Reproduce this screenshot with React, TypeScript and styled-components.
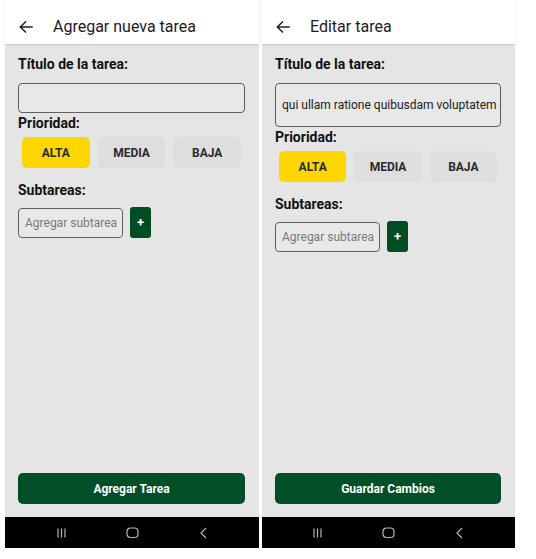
import React from "react";
import styled, { createGlobalStyle } from "styled-components";

const Global = createGlobalStyle`
  html, body { margin: 0; padding: 0; background: #ffffff; }
  body { font-family: Roboto, "Noto Sans", "Liberation Sans", sans-serif; }
  * { box-sizing: border-box; }
`;

const Page = styled.div`
  display: flex;
  gap: 3px;
  padding-left: 5px;
  height: 559px;
  align-items: flex-start;
`;

const Phone = styled.div<{ $w: number }>`
  width: ${(p) => p.$w}px;
  height: 548px;
  display: flex;
  flex-direction: column;
`;

const Header = styled.div`
  height: 44px;
  flex: 0 0 44px;
  background: #ffffff;
  display: flex;
  align-items: flex-start;
  padding: 17px 0 0 14px;
  gap: 20px;
  position: relative;
  z-index: 1;
  box-shadow: 0 1px 1.5px rgba(0, 0, 0, 0.12);
`;

const BackIcon = styled.svg`
  width: 14px;
  height: 12px;
  margin-top: 4px;
  flex: 0 0 auto;
`;

const Title = styled.div`
  font-size: 16px;
  line-height: 19px;
  color: #1c1c1c;
`;

const Content = styled.div`
  flex: 1;
  background: #e5e5e5;
  display: flex;
  flex-direction: column;
  padding: 12px 14px 13px 13px;
`;

const Label = styled.div<{ $mt?: number; $mb?: number }>`
  font-size: 14px;
  line-height: 17px;
  font-weight: 700;
  color: #111;
  margin-top: ${(p) => p.$mt ?? 0}px;
  margin-bottom: ${(p) => p.$mb ?? 10}px;
`;

const TextInput = styled.div<{ $h: number }>`
  height: ${(p) => p.$h}px;
  border: 1px solid #5f5f5f;
  border-radius: 4px;
  background: #e8e8e8;
  display: flex;
  align-items: center;
  padding: 0 6px;
  font-size: 12px;
  color: #222;
  white-space: nowrap;
  overflow: hidden;
`;

const PriorityRow = styled.div`
  display: flex;
  margin-top: 5px;
  margin-bottom: 14px;
`;

const PriorityButton = styled.div<{ $active?: boolean }>`
  flex: 1;
  margin: 0 4px;
  height: 31px;
  border-radius: 5px;
  background: ${(p) => (p.$active ? "#ffd700" : "#dedede")};
  display: flex;
  align-items: center;
  justify-content: center;
  font-size: 12px;
  font-weight: 700;
  color: #2a2a2a;
`;

const SubRow = styled.div`
  display: flex;
  gap: 7px;
  align-items: center;
`;

const SubInput = styled.div`
  width: 105px;
  height: 30px;
  border: 1px solid #5f5f5f;
  border-radius: 4px;
  background: #e8e8e8;
  display: flex;
  align-items: center;
  padding: 0 6px;
  font-size: 12px;
  color: #7a7a7a;
  white-space: nowrap;
  overflow: hidden;
`;

const PlusButton = styled.div`
  width: 21px;
  height: 31px;
  border-radius: 3px;
  background: #004d24;
  color: #fff;
  font-weight: 700;
  font-size: 13px;
  display: flex;
  align-items: center;
  justify-content: center;
`;

const Spacer = styled.div`
  flex: 1;
`;

const PrimaryButton = styled.div`
  height: 31px;
  border-radius: 5px;
  background: #004f26;
  color: #fff;
  font-weight: 700;
  font-size: 12px;
  display: flex;
  align-items: center;
  justify-content: center;
`;

const NavBar = styled.div`
  height: 31px;
  flex: 0 0 31px;
  background: #000;
  display: flex;
  align-items: center;
  justify-content: center;
  gap: 58px;
`;

const NavIcon = styled.svg`
  width: 13px;
  height: 12px;
  display: block;
`;

function Back() {
  return (
    <BackIcon viewBox="0 0 14 12">
      <path d="M13 6H1.5M6.5 1L1.3 6l5.2 5" stroke="#222" strokeWidth="1.5" fill="none" strokeLinecap="square" />
    </BackIcon>
  );
}

function Nav() {
  return (
    <NavBar>
      <NavIcon viewBox="0 0 13 12">
        <path d="M3 1.5v9M6.5 1.5v9M10 1.5v9" stroke="#b5b5b5" strokeWidth="1.2" />
      </NavIcon>
      <NavIcon viewBox="0 0 13 12">
        <rect x="1" y="1" width="11" height="9.5" rx="3.5" stroke="#b5b5b5" strokeWidth="1.2" fill="none" />
      </NavIcon>
      <NavIcon viewBox="0 0 13 12">
        <path d="M9 1L4 6l5 5" stroke="#b5b5b5" strokeWidth="1.2" fill="none" />
      </NavIcon>
    </NavBar>
  );
}

type ScreenProps = {
  width: number;
  title: string;
  value: string;
  inputHeight: number;
  action: string;
};

function Screen({ width, title, value, inputHeight, action }: ScreenProps) {
  return (
    <Phone $w={width}>
      <Header>
        <Back />
        <Title>{title}</Title>
      </Header>
      <Content>
        <Label>Título de la tarea:</Label>
        <TextInput $h={inputHeight}>{value}</TextInput>
        <Label $mt={2} $mb={0}>Prioridad:</Label>
        <PriorityRow>
          <PriorityButton $active>ALTA</PriorityButton>
          <PriorityButton>MEDIA</PriorityButton>
          <PriorityButton>BAJA</PriorityButton>
        </PriorityRow>
        <Label $mb={8}>Subtareas:</Label>
        <SubRow>
          <SubInput>Agregar subtarea</SubInput>
          <PlusButton>+</PlusButton>
        </SubRow>
        <Spacer />
        <PrimaryButton>{action}</PrimaryButton>
      </Content>
      <Nav />
    </Phone>
  );
}

export default function App() {
  return (
    <>
      <Global />
      <Page>
        <Screen width={254} title="Agregar nueva tarea" value="" inputHeight={30} action="Agregar Tarea" />
        <Screen
          width={253}
          title="Editar tarea"
          value="qui ullam ratione quibusdam voluptatem et"
          inputHeight={44}
          action="Guardar Cambios"
        />
      </Page>
    </>
  );
}
